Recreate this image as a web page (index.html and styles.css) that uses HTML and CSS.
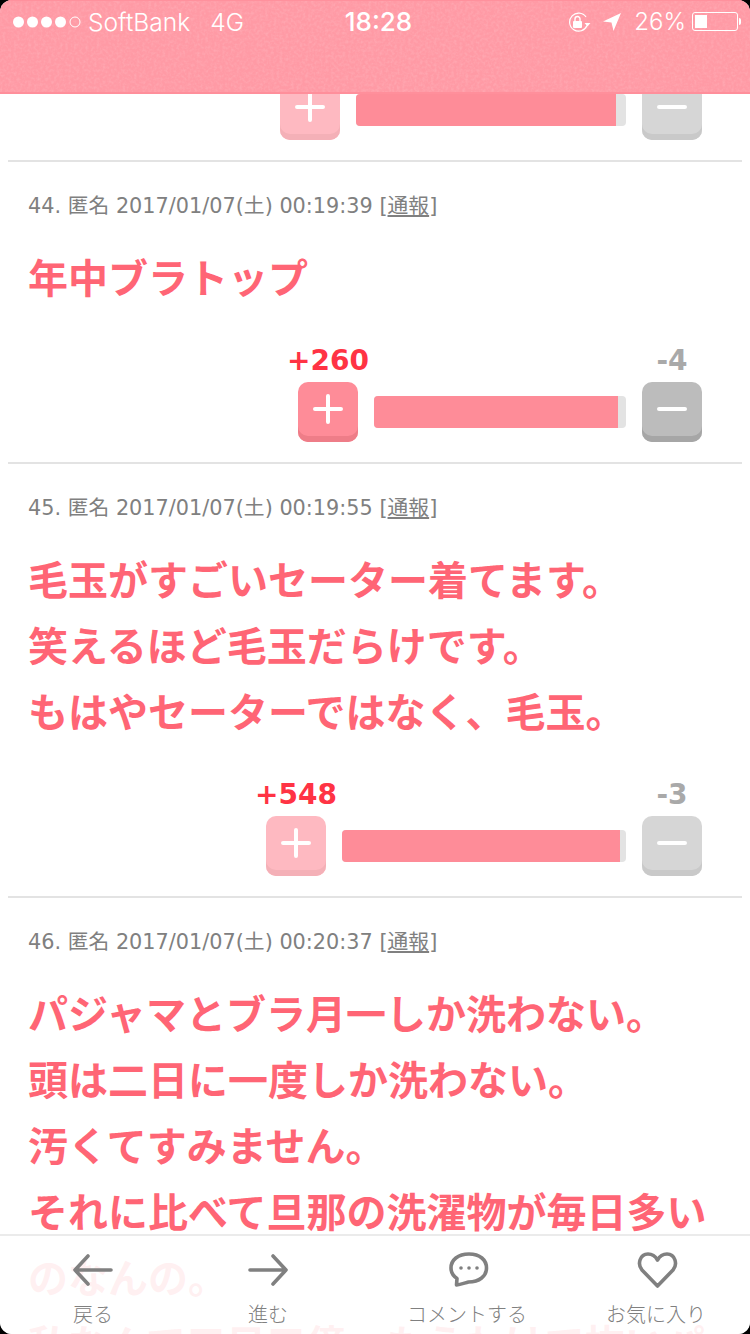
FILE: index.html
```html
<!DOCTYPE html>
<html lang="ja">

<head>
    <meta charset="UTF-8">
    <meta name="viewport" content="width=device-width, initial-scale=1.0">
    <title>コメント</title>
    <link rel="stylesheet" href="styles.css">
</head>

<body>
    <div class="page">
        <header class="topbar">
            <!-- fine paper grain behind the status line -->
            <svg class="grain" width="750" height="91">
                <filter id="grain-noise">
                    <feTurbulence type="fractalNoise" baseFrequency="0.35" numOctaves="2" seed="4" />
                    <feColorMatrix values="0 0 0 0 1  0 0 0 0 1  0 0 0 0 1  0 0 0 1.2 -0.45" />
                </filter>
                <rect width="750" height="91" filter="url(#grain-noise)" opacity="0.22" />
            </svg>
            <div class="status">
                <div class="status-left">
                    <svg class="signal" viewBox="0 0 72 12" width="72" height="12">
                        <circle cx="5.5" cy="6" r="5.5" fill="#fff" />
                        <circle cx="19.5" cy="6" r="5.5" fill="#fff" />
                        <circle cx="33.5" cy="6" r="5.5" fill="#fff" />
                        <circle cx="47.5" cy="6" r="5.5" fill="#fff" />
                        <circle cx="62" cy="6" r="5" fill="none" stroke="#fff" stroke-width="1" />
                    </svg>
                    <span class="carrier">SoftBank</span>
                    <span class="network">4G</span>
                </div>
                <div class="status-time">18:28</div>
                <div class="status-right">
                    <svg class="rotate-lock" viewBox="0 0 24 20" width="24" height="20">
                        <path d="M20 13.500A9 9 0 1 1 19 5" fill="none" stroke="#fff" stroke-width="1.2" />
                        <path d="M17.500 11h6l-3 3.500z" fill="#fff" />
                        <rect x="6" y="9" width="9" height="7" rx="1" fill="#fff" />
                        <path d="M8 9V7a2.500 2.500 0 0 1 5 0v2" fill="none" stroke="#fff" stroke-width="1.400" />
                    </svg>
                    <svg class="location" viewBox="0 0 18 18" width="18" height="18">
                        <path d="M18 0 0 8.500l8.500 1L10.500 18z" fill="#fff" />
                    </svg>
                    <span class="battery-pct">26%</span>
                    <div class="battery">
                        <div class="battery-level"></div>
                    </div>
                </div>
            </div>
        </header>

        <main class="list">
            <section class="comment comment--cut">
                <div class="vote">
                    <div class="vote-col">
                        <button class="vote-btn vote-btn--plus vote-btn--off">
                            <svg class="vote-icon" viewBox="0 0 30 30"><path d="M15 2v26M2 15h26" /></svg>
                        </button>
                    </div>
                    <div class="vote-bar" style="width: 270px">
                        <div class="vote-fill" style="width: 260px"></div>
                    </div>
                    <div class="vote-col">
                        <button class="vote-btn vote-btn--minus vote-btn--off">
                            <svg class="vote-icon" viewBox="0 0 30 30"><path d="M2 15h26" /></svg>
                        </button>
                    </div>
                </div>
            </section>

            <section class="comment">
                <p class="comment-meta">44. 匿名 2017/01/07(土) 00:19:39 [<a class="comment-report">通報</a>]</p>
                <p class="comment-text">年中ブラトップ</p>
                <div class="vote">
                    <div class="vote-col">
                        <span class="vote-count vote-count--plus">+260</span>
                        <button class="vote-btn vote-btn--plus">
                            <svg class="vote-icon" viewBox="0 0 30 30"><path d="M15 2v26M2 15h26" /></svg>
                        </button>
                    </div>
                    <div class="vote-bar" style="width: 252px">
                        <div class="vote-fill" style="width: 244px"></div>
                    </div>
                    <div class="vote-col">
                        <span class="vote-count vote-count--minus">-4</span>
                        <button class="vote-btn vote-btn--minus">
                            <svg class="vote-icon" viewBox="0 0 30 30"><path d="M2 15h26" /></svg>
                        </button>
                    </div>
                </div>
            </section>

            <section class="comment">
                <p class="comment-meta">45. 匿名 2017/01/07(土) 00:19:55 [<a class="comment-report">通報</a>]</p>
                <p class="comment-text">毛玉がすごいセーター着てます。<br>笑えるほど毛玉だらけです。<br>もはやセーターではなく、毛玉。</p>
                <div class="vote">
                    <div class="vote-col">
                        <span class="vote-count vote-count--plus">+548</span>
                        <button class="vote-btn vote-btn--plus vote-btn--off">
                            <svg class="vote-icon" viewBox="0 0 30 30"><path d="M15 2v26M2 15h26" /></svg>
                        </button>
                    </div>
                    <div class="vote-bar" style="width: 284px">
                        <div class="vote-fill" style="width: 278px"></div>
                    </div>
                    <div class="vote-col">
                        <span class="vote-count vote-count--minus">-3</span>
                        <button class="vote-btn vote-btn--minus vote-btn--off">
                            <svg class="vote-icon" viewBox="0 0 30 30"><path d="M2 15h26" /></svg>
                        </button>
                    </div>
                </div>
            </section>

            <section class="comment">
                <p class="comment-meta">46. 匿名 2017/01/07(土) 00:20:37 [<a class="comment-report">通報</a>]</p>
                <p class="comment-text">パジャマとブラ月一しか洗わない。<br>頭は二日に一度しか洗わない。<br>汚くてすみません。<br>それに比べて旦那の洗濯物が毎日多い<br>のなんの。<br>私なんて三日三億、もうわけて抜いパ</p>
            </section>
        </main>

        <nav class="tabbar">
            <a class="tab">
                <svg class="tab-icon" viewBox="0 0 44 40">
                    <path d="M40 20H4M17 6 4 20l13 14" />
                </svg>
                <span class="tab-label">戻る</span>
            </a>
            <a class="tab">
                <svg class="tab-icon" viewBox="0 0 44 40">
                    <path d="M4 20h36M27 6l13 14-13 14" />
                </svg>
                <span class="tab-label">進む</span>
            </a>
            <a class="tab">
                <svg class="tab-icon" viewBox="0 0 44 40">
                    <path d="M24 4C13 4 6 10 6 18c0 4.500 2.200 8 6 10.500l-.5 6.500c4-.5 8-2 12-3 11 0 18-6 18-14S35 4 24 4z" />
                    <circle class="tab-dot" cx="16" cy="18" r="1.800" />
                    <circle class="tab-dot" cx="24" cy="18" r="1.800" />
                    <circle class="tab-dot" cx="32" cy="18" r="1.800" />
                </svg>
                <span class="tab-label">コメントする</span>
            </a>
            <a class="tab">
                <svg class="tab-icon" viewBox="0 0 44 40">
                    <path d="M23.500 36 8 20C3 14 6 4 14 4c4.500 0 7.500 2.500 9.500 6 2-3.500 5-6 9.500-6 8 0 11 10 6 16z" />
                </svg>
                <span class="tab-label">お気に入り</span>
            </a>
        </nav>
    </div>
</body>

</html>
```

FILE: styles.css
```css
/*
MAIN COLOR: #ff6575
GREY COLOR: #808080
*/

* {
    margin: 0;
    padding: 0;
    box-sizing: border-box;
}

body {
    background-color: #000;
    font-family: 'DejaVu Sans', 'Noto Sans CJK JP', sans-serif;
}

.page {
    width: 750px;
    height: 1334px;
    position: relative;
    overflow: hidden;
    background-color: #fff;
    border-radius: 12px;
}

/* top bar, stays over the list */
.topbar {
    position: absolute;
    top: 0;
    left: 0;
    right: 0;
    z-index: 2;
    height: 94px;
    background-color: #ff9aa5;
    border-top: 1px solid #ff919d;
    border-bottom: 2px solid #ff8f9b;
}

.grain {
    position: absolute;
    top: 0;
    left: 0;
}

.status {
    height: 41px;
    position: relative;
    display: flex;
    align-items: center;
    color: #fff;
    font-family: 'Inter', sans-serif;
    font-size: 24.6px;
    font-weight: 300;
}

.status-left {
    flex: 1;
    display: flex;
    align-items: center;
    padding-left: 13px;
}

.carrier {
    margin-left: 3px;
}

.network {
    margin-left: 20px;
}

.status-time {
    margin-left: 6px;
    font-size: 26px;
    font-weight: 500;
}

.status-right {
    flex: 1;
    display: flex;
    align-items: center;
    justify-content: flex-end;
    padding-right: 12px;
    font-size: 24px;
}

.rotate-lock {
    margin-right: 12px;
}

.location {
    margin-right: 13px;
}

.battery-pct {
    margin-right: 6px;
}

.battery {
    width: 46px;
    height: 19px;
    padding: 2px;
    position: relative;
    border: 1px solid #fff;
    border-radius: 3px;
}

.battery::after {
    content: "";
    position: absolute;
    top: 5px;
    right: -4px;
    width: 2px;
    height: 7px;
    background-color: #fff;
    border-radius: 0 2px 2px 0;
}

.battery-level {
    width: 12px;
    height: 100%;
    background-color: #fff;
}

/* comment list */
.list {
    padding: 80px 8px 0;
}

.comment {
    padding-top: 30px;
    padding-bottom: 20px;
    border-bottom: 2px solid #e3e3e3;
}

.comment--cut {
    padding-top: 0;
}

.comment:last-child {
    border-bottom: none;
}

.comment-meta {
    padding-left: 20px;
    font-size: 20.8px;
    line-height: 28px;
    color: #808080;
}

.comment-report {
    text-decoration: underline;
}

.comment-text {
    margin-top: 23px;
    padding-left: 20px;
    font-family: 'Noto Sans CJK JP', sans-serif;
    font-size: 40px;
    font-weight: 700;
    line-height: 66px;
    color: #ff6575;
    white-space: nowrap;
}

.vote {
    margin-top: 37px;
    padding-right: 40px;
    display: flex;
    justify-content: flex-end;
    align-items: flex-end;
    gap: 16px;
}

.comment--cut .vote {
    margin-top: 0;
}

.vote-col {
    width: 60px;
    display: flex;
    flex-direction: column;
    align-items: center;
}

.vote-count {
    margin-bottom: 6px;
    font-size: 28px;
    font-weight: 700;
    line-height: 30px;
    white-space: nowrap;
}

.vote-count--plus {
    color: #ff3344;
}

.vote-count--minus {
    color: #a9a9a9;
}

.vote-btn {
    width: 60px;
    height: 60px;
    padding-bottom: 6px;
    border: none;
    border-radius: 10px;
    display: flex;
    justify-content: center;
    align-items: center;
    cursor: pointer;
}

.vote-btn--plus {
    background-color: #fe8c98;
    box-shadow: inset 0 -6px 0 #ee7d88;
}

.vote-btn--minus {
    background-color: #bcbcbc;
    box-shadow: inset 0 -6px 0 #a6a6a6;
}

.vote-btn--off {
    opacity: .6;
}

.vote-icon {
    width: 30px;
    height: 30px;
    fill: none;
    stroke: #fff;
    stroke-width: 4;
    stroke-linecap: round;
}

.vote-bar {
    height: 32px;
    margin-bottom: 14px;
    background-color: #e3e3e3;
    border-radius: 4px;
    overflow: hidden;
}

.vote-fill {
    height: 100%;
    background-color: #fe8c98;
}

/* bottom tabs, the list shows faintly through them */
.tabbar {
    position: absolute;
    left: 0;
    right: 0;
    bottom: 0;
    z-index: 2;
    height: 100px;
    display: grid;
    grid-template-columns: 186px 164px 234px 144px;
    background-color: rgba(255, 255, 255, .9);
    border-top: 2px solid #ebebeb;
}

.tab {
    display: flex;
    flex-direction: column;
    align-items: center;
    padding-top: 14px;
}

.tab-icon {
    width: 44px;
    height: 40px;
    fill: none;
    stroke: #808080;
    stroke-width: 3.6;
    stroke-linecap: round;
    stroke-linejoin: round;
}

.tab-dot {
    fill: #808080;
    stroke: none;
}

.tab-label {
    margin-top: 10px;
    font-family: 'Noto Sans CJK JP', sans-serif;
    font-size: 20px;
    font-weight: 300;
    line-height: 28px;
    color: #808080;
}
```
